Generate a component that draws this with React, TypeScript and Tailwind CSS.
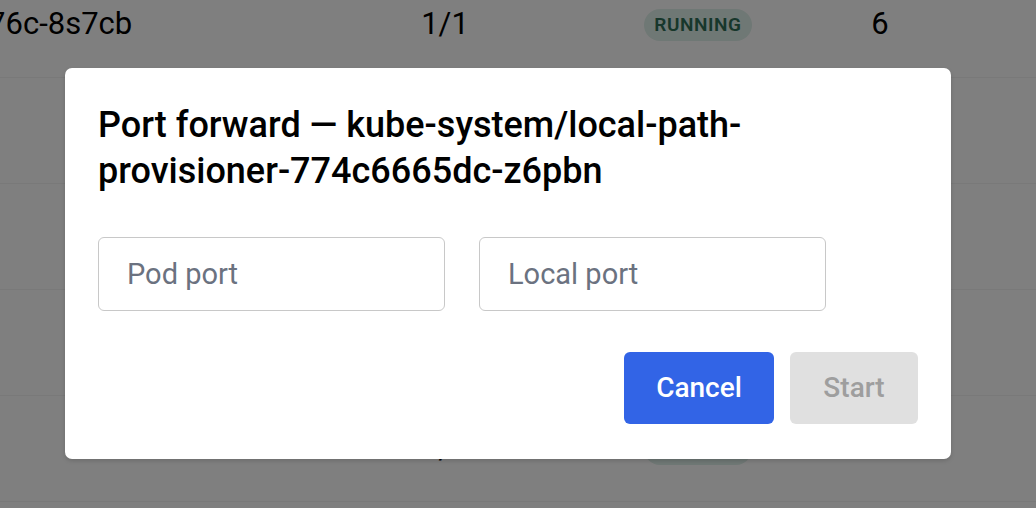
const pods = [
  { name: 'coredns-6f9b8d576c-8s7cb', ready: '1/1', status: 'Running', restarts: 6 },
  { name: 'local-path-pr', ready: '1/1', status: 'Running', restarts: 6 },
  { name: 'metrics-serv', ready: '1/1', status: 'Running', restarts: 6 },
  { name: 'svclb-traefik', ready: '2/2', status: 'Running', restarts: 6 },
  { name: 'traefik-5fb47', ready: '1/1', status: 'Running', restarts: 6 },
];

function PodRow({ pod }: { pod: (typeof pods)[number] }) {
  return (
    <div className="flex h-[106px] items-center border-b border-[#f3f3f3] text-[31px] text-black">
      <div className="-ml-[247px] w-[380px] shrink-0 overflow-hidden whitespace-nowrap">{pod.name}</div>
      <div className="ml-[212px] w-[200px] shrink-0 text-center">{pod.ready}</div>
      <div className="ml-[53px] flex w-[200px] shrink-0 justify-center">
        <span className="rounded-full bg-[#dff0ea] px-[10px] py-[3px] text-[19px] font-semibold uppercase leading-[26px] tracking-[0.03em] text-[#2f6f57]">
          {pod.status}
        </span>
      </div>
      <div className="ml-[32px] w-[100px] shrink-0 text-center">{pod.restarts}</div>
    </div>
  );
}

export default function App() {
  return (
    <div className="relative h-[508px] w-[1036px] overflow-hidden bg-white font-['Roboto',sans-serif]">
      <div className="-mt-[28px]">
        {pods.map((p) => (
          <PodRow key={p.name} pod={p} />
        ))}
      </div>

      <div className="absolute inset-0 flex items-start bg-black/50 pl-[65px] pt-[68px]">
        <div className="w-[886px] rounded-[7px] bg-white px-[33px] pb-[35px] pt-[34px] shadow-[0_2px_4px_rgba(0,0,0,0.15)]">
          <h2 className="text-[36px] font-medium leading-[46px] text-black">
            Port forward — kube-system/local-path-provisioner-774c6665dc-z6pbn
          </h2>

          <div className="mt-[43px] flex gap-[34px]">
            <input
              placeholder="Pod port"
              className="h-[74px] w-[347px] rounded-[6px] border border-[#c8c8c8] px-[28px] text-[29px] text-black outline-none placeholder:text-[#6b7280]"
            />
            <input
              placeholder="Local port"
              className="h-[74px] w-[347px] rounded-[6px] border border-[#c8c8c8] px-[28px] text-[29px] text-black outline-none placeholder:text-[#6b7280]"
            />
          </div>

          <div className="mt-[41px] flex justify-end gap-[16px]">
            <button className="h-[72px] w-[150px] rounded-[6px] bg-[#3264e6] text-[28px] font-medium text-white">
              Cancel
            </button>
            <button disabled className="h-[72px] w-[128px] rounded-[6px] bg-[#e0e0e0] text-[28px] font-medium text-[#9e9e9e]">
              Start
            </button>
          </div>
        </div>
      </div>
    </div>
  );
}
